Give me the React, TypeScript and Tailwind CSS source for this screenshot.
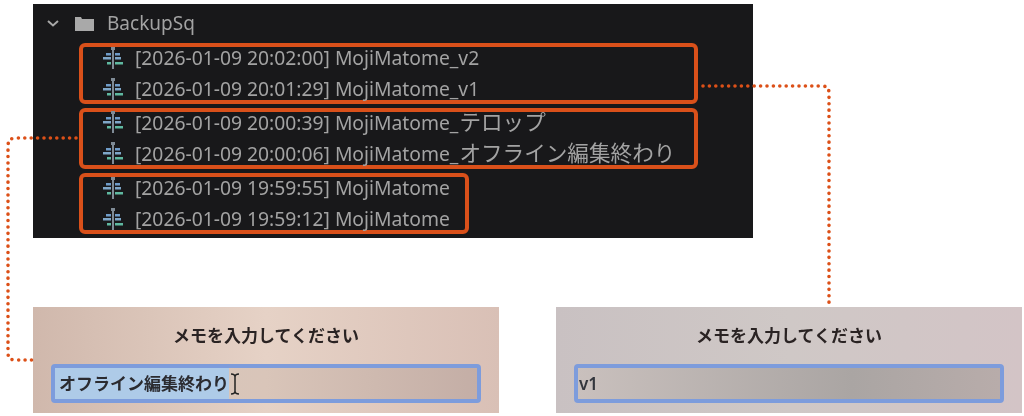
const LATIN = "font-['Noto_Sans','Noto_Sans_CJK_JP',sans-serif]";

function SeqIcon() {
  return (
    <svg width="20" height="22" viewBox="0 0 20 22" className="shrink-0 blur-[0.5px]">
      <rect x="9" y="0" width="2" height="22" fill="#7f8b96" />
      <rect x="8" y="0" width="4" height="3" fill="#7f8b96" />
      <rect x="3" y="6" width="5" height="2.5" fill="#6f9cc9" />
      <rect x="12" y="6" width="5" height="2.5" fill="#6f9cc9" />
      <rect x="0" y="10" width="8" height="2.5" fill="#7fa7c9" />
      <rect x="12" y="10" width="6" height="2.5" fill="#7fa7c9" />
      <rect x="4" y="15" width="4" height="2.5" fill="#5fb8a0" />
      <rect x="12" y="15" width="8" height="2.5" fill="#5fb8a0" />
    </svg>
  );
}

function Row({ time, name, jp }: { time: string; name: string; jp?: string }) {
  return (
    <div className="flex h-[27px] shrink-0 items-center gap-[12px] pl-[20px] whitespace-nowrap">
      <SeqIcon />
      <span className="text-[19.3px] leading-none text-[#a3a3a3] blur-[0.5px]">
        [{time}] {name}
        {jp ? <span className="ml-[1px] text-[21.6px]">{jp}</span> : null}
      </span>
    </div>
  );
}

function Group({ className, children }: { className: string; children: React.ReactNode }) {
  return (
    <div className={`flex h-[61px] flex-col justify-center gap-[4px] rounded-[6px] border-4 border-[#d9501a] ${className}`}>
      {children}
    </div>
  );
}

function Card({ className, inputClass, children }: { className: string; inputClass: string; children: React.ReactNode }) {
  return (
    <div className={`flex h-[106px] w-[466px] flex-col px-[18px] ${className}`}>
      <div className="flex h-[57px] items-center justify-center text-[17px] font-bold text-[#2a2323] blur-[0.4px]">
        メモを入力してください
      </div>
      <div className={`flex h-[39px] items-stretch rounded-[4px] border-4 border-[#7d9cdc] text-[17px] font-bold text-[#2b2b30] ${inputClass}`}>
        {children}
      </div>
    </div>
  );
}

export default function App() {
  return (
    <div className={`relative h-[416px] w-[1024px] overflow-hidden bg-white ${LATIN}`}>
      <div className="ml-[33px] pt-[4px]">
        <div className="flex h-[234px] w-[720px] flex-col bg-[#18181a]">
          <div className="flex h-[39px] items-center pl-[14px]">
            <svg width="12" height="7" viewBox="0 0 12 7" className="shrink-0">
              <path d="M1 1l5 4.5L11 1" fill="none" stroke="#a8a8a8" strokeWidth="2" />
            </svg>
            <svg width="19" height="15" viewBox="0 0 19 15" className="ml-[16px] shrink-0 blur-[0.4px]">
              <path d="M0 1h6l1 2h12v12H0z" fill="#a9a9a9" />
            </svg>
            <span className="ml-[13px] text-[19px] leading-none text-[#a3a3a3] blur-[0.5px]">BackupSq</span>
          </div>
          <div className="ml-[46px] flex flex-col gap-[4px]">
            <Group className="w-[619px]">
              <Row time="2026-01-09 20:02:00" name="MojiMatome_v2" />
              <Row time="2026-01-09 20:01:29" name="MojiMatome_v1" />
            </Group>
            <Group className="w-[619px] pb-[2px]">
              <Row time="2026-01-09 20:00:39" name="MojiMatome_" jp="テロップ" />
              <Row time="2026-01-09 20:00:06" name="MojiMatome_" jp="オフライン編集終わり" />
            </Group>
            <Group className="w-[390px]">
              <Row time="2026-01-09 19:59:55" name="MojiMatome" />
              <Row time="2026-01-09 19:59:12" name="MojiMatome" />
            </Group>
          </div>
        </div>
        <div className="mt-[69px] flex gap-[57px]">
          <Card
            className="bg-linear-to-r from-[#d0b8ac] via-[#e6d2c6] to-[#d9c0b6]"
            inputClass="bg-linear-to-r from-[#d6c6bb] via-[#d9c5b9] to-[#c4aea6]"
          >
            <span className="flex items-center bg-[#aecbe8] pl-[4px] blur-[0.3px]">オフライン編集終わり</span>
            <svg width="10" height="22" viewBox="0 0 10 22" className="ml-[1px] shrink-0 self-center">
              <path d="M1 1c2 0 4 1 4 3v14c0 2 2 3 4 3M9 1C7 1 5 2 5 4M5 18c0 2-2 3-4 3" fill="none" stroke="#222" strokeWidth="1.5" />
            </svg>
          </Card>
          <Card
            className="bg-linear-to-r from-[#c9c1c2] via-[#cfc8c6] to-[#d3c4c6]"
            inputClass="bg-linear-to-r from-[#c9c0bd] via-[#aaa5a3] via-65% to-[#b8acaa]"
          >
            <span className="flex items-center pl-[1px] font-semibold text-[#33363d] blur-[0.3px]">v1</span>
          </Card>
        </div>
      </div>
      <svg width="1024" height="416" viewBox="0 0 1024 416" className="pointer-events-none absolute inset-0" fill="none">
        <path
          d="M703 86H822Q829 86 829 93V304"
          stroke="#dc5018"
          strokeWidth="3.6"
          strokeLinecap="round"
          strokeDasharray="0 6.4"
        />
        <path
          d="M76 138H16Q8 138 8 146V353Q8 360 15 360H33"
          stroke="#dc5018"
          strokeWidth="3.6"
          strokeLinecap="round"
          strokeDasharray="0 6.4"
        />
      </svg>
    </div>
  );
}
